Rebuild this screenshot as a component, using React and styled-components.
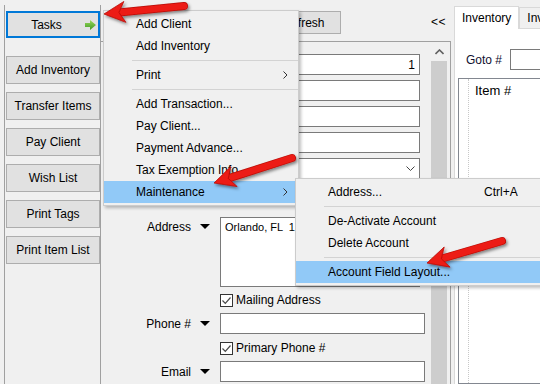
import React from 'react';
import styled, { createGlobalStyle } from 'styled-components';

const GlobalStyle = createGlobalStyle`
    * { box-sizing: border-box; }
    html, body { margin: 0; padding: 0; background: #f0f0f0; }
    body {
        font-family: "Liberation Sans", Arial, sans-serif;
        font-size: 12px;
        color: #000;
    }
`

const Screen = styled.div`
    position: relative;
    display: flex;
    width: 540px;
    height: 384px;
    overflow: hidden;
    background: #f0f0f0;
`

// left task column
const TaskPanel = styled.div`
    display: flex;
    flex-direction: column;
    flex-shrink: 0;
    gap: 8px;
    width: 97px;
    margin: 5px 0 0 4px;
    padding: 6px 0 0 1px;
    border-left: 1px solid #a0a0a0;
    border-right: 1px solid #a0a0a0;
`

const TaskButton = styled.div`
    display: flex;
    align-items: center;
    justify-content: center;
    width: 94px;
    height: 28px;
    background: #e1e1e1;
    border: 1px solid #adadad;
    white-space: nowrap;
`

const TasksButton = styled(TaskButton)`
    height: 27px;
    margin-bottom: 10px;
    padding-right: 2px;
    border: 2px solid #0078d7;
    justify-content: flex-start;
`

const TasksLabel = styled.span`
    flex: 1;
    text-align: center;
`

// center form
const Main = styled.div`
    display: flex;
    flex-direction: column;
    flex-shrink: 0;
    width: 353px;
`

const TopBar = styled.div`
    display: flex;
    align-items: flex-start;
    gap: 5px;
    height: 41px;
    padding: 11px 8px 0 5px;
`

const BarButton = styled.div`
    display: flex;
    align-items: center;
    justify-content: center;
    width: 75px;
    height: 23px;
    background: #e1e1e1;
    border: 1px solid #adadad;
`

const Collapse = styled.span`
    margin-left: auto;
    line-height: 23px;
    letter-spacing: 0.5px;
`

const GroupBox = styled.div`
    flex: 1;
    display: flex;
    margin-right: 3px;
    padding-right: 3px;
    border-top: 1px solid #a0a0a0;
    border-right: 1px solid #a0a0a0;
`

const FormArea = styled.div`
    flex: 1;
    display: flex;
    flex-direction: column;
    padding-top: 12px;
`

const FieldRow = styled.div`
    display: flex;
    align-items: ${({ $top }) => ($top ? 'flex-start' : 'center')};
    margin-top: ${({ $gap }) => $gap}px;
`

const LabelCell = styled.div`
    display: flex;
    align-items: center;
    justify-content: flex-end;
    gap: 9px;
    width: 119px;
    height: ${({ $tall }) => ($tall ? 19 : 21)}px;
    padding-right: 10px;
    white-space: nowrap;
`

const TextBox = styled.div`
    display: flex;
    align-items: center;
    justify-content: ${({ $right }) => ($right ? 'flex-end' : 'flex-start')};
    width: ${({ $wide }) => ($wide ? 205 : 200)}px;
    height: 21px;
    padding: 0 4px;
    background: #fff;
    border: 1px solid #7a7a7a;
`

const AddressBox = styled.div`
    width: 200px;
    height: 70px;
    padding: 3px 4px;
    background: #fff;
    border: 1px solid #7a7a7a;
    font-size: 11px;
    white-space: pre;
`

const CheckRow = styled.div`
    display: flex;
    align-items: center;
    gap: 3px;
    height: 20px;
    margin-top: ${({ $gap }) => $gap}px;
    padding-left: 119px;
`

const CheckBox = styled.div`
    display: flex;
    align-items: center;
    justify-content: center;
    width: 13px;
    height: 13px;
    background: #fff;
    border: 1px solid #333;
`

const ScrollBar = styled.div`
    display: flex;
    flex-direction: column;
    width: 16px;
    margin-top: 1px;
`

const ScrollArrow = styled.div`
    display: flex;
    align-items: center;
    justify-content: center;
    height: 18px;
`

const ScrollThumb = styled.div`
    flex: 1;
    background: #cdcdcd;
`

// right pane
const RightPane = styled.div`
    flex: 1;
    min-width: 0;
    display: flex;
    flex-direction: column;
    overflow: hidden;
`

const TabStrip = styled.div`
    display: flex;
    align-items: flex-end;
    height: 28px;
    padding-top: 5px;
`

const Tab = styled.div`
    position: relative;
    display: flex;
    align-items: center;
    flex-shrink: 0;
    height: ${({ $active }) => ($active ? 23 : 21)}px;
    margin-bottom: ${({ $active }) => ($active ? -1 : 0)}px;
    padding: 0 7px;
    background: ${({ $active }) => ($active ? '#fff' : '#f0f0f0')};
    border: 1px solid #d9d9d9;
    border-bottom: none;
    white-space: nowrap;
    z-index: ${({ $active }) => ($active ? 1 : 0)};
`

const TabPage = styled.div`
    flex: 1;
    display: flex;
    flex-direction: column;
    background: #fff;
    border-top: 1px solid #d9d9d9;
    border-left: 1px solid #d9d9d9;
`

const GotoRow = styled.div`
    display: flex;
    align-items: center;
    gap: 8px;
    margin-top: 20px;
    padding-left: 11px;
    color: #101030;
    white-space: nowrap;
`

const GotoInput = styled.div`
    width: 60px;
    height: 21px;
    border: 1px solid #7a7a7a;
    flex-shrink: 0;
`

const ListView = styled.div`
    flex: 1;
    margin: 8px -4px 0 3px;
    border: 1px solid #828790;
    display: flex;
`

const ListGutter = styled.div`
    width: 10px;
    border-right: 1px dotted #c8c8c8;
`

const ListHeader = styled.div`
    padding: 4px 0 0 6px;
    font-size: 13px;
    line-height: 16px;
`

// popup menus
const Menu = styled.div`
    position: absolute;
    display: flex;
    flex-direction: column;
    padding: 2px 3px 2px 0;
    background: #f0f0f0;
    border: 1px solid #cccccc;
    box-shadow: 2px 2px 3px rgba(0, 0, 0, 0.25);
`

const TasksMenu = styled(Menu)`
    left: 103px;
    top: 10px;
    width: 196px;
`

const MaintenanceMenu = styled(Menu)`
    left: 295px;
    top: 178px;
    width: 262px;
`

const MenuItem = styled.div`
    display: flex;
    align-items: center;
    height: 22px;
    padding: 0 7px 0 32px;
    background: ${({ $hot }) => ($hot ? '#91c9f7' : 'transparent')};
    white-space: nowrap;
`

const MenuLabel = styled.span`
    flex: ${({ $fixed }) => ($fixed ? '0 0 156px' : '1')};
`

const Separator = styled.div`
    height: 7px;
    margin-left: 28px;
    margin-right: -3px;
    padding-top: 3px;

    &::after {
        content: '';
        display: block;
        height: 1px;
        background: #d3d3d3;
    }
`

const Overlay = styled.svg`
    position: absolute;
    left: 0;
    top: 0;
    pointer-events: none;
`

const GreenArrow = () => (
    <svg width="11" height="10" viewBox="0 0 11 10">
        <defs>
            <linearGradient id="ga" x1="0" y1="0" x2="0" y2="1">
                <stop offset="0" stopColor="#9ad95c" />
                <stop offset="1" stopColor="#3f9a22" />
            </linearGradient>
        </defs>
        <polygon points="0,3 5,3 5,0 11,5 5,10 5,7 0,7" fill="url(#ga)" />
    </svg>
);

const DropMark = () => (
    <svg width="10" height="5" viewBox="0 0 10 5">
        <polygon points="0,0 10,0 5,5" fill="#000" />
    </svg>
);

const Check = () => (
    <svg width="11" height="11" viewBox="0 0 11 11">
        <polyline points="1.5,5.5 4.3,8.3 9.5,2.5" fill="none" stroke="#4a4a4a" strokeWidth="1.2" />
    </svg>
);

const SubArrow = () => (
    <svg width="5" height="8" viewBox="0 0 5 8">
        <polyline points="0.5,0.5 4,4 0.5,7.5" fill="none" stroke="#333" strokeWidth="1" />
    </svg>
);

const ComboChevron = () => (
    <svg width="9" height="5" viewBox="0 0 9 5">
        <polyline points="0.5,0.5 4.5,4.5 8.5,0.5" fill="none" stroke="#444" strokeWidth="1" />
    </svg>
);

const UpChevron = () => (
    <svg width="9" height="6" viewBox="0 0 9 6">
        <polyline points="0.5,5 4.5,1 8.5,5" fill="none" stroke="#606060" strokeWidth="1.6" />
    </svg>
);

const arrowShape = (x1, y1, x2, y2) => {
    const dx = x2 - x1;
    const dy = y2 - y1;
    const len = Math.hypot(dx, dy);
    const ux = dx / len;
    const uy = dy / len;
    const px = -uy;
    const py = ux;
    const head = 19;
    const half = 10.5;
    const bx = x2 - ux * head;
    const by = y2 - uy * head;
    const nx = bx + ux * 4;
    const ny = by + uy * 4;
    const pts = [
        [x2, y2],
        [bx + px * half - ux * 2, by + py * half - uy * 2],
        [nx, ny],
        [bx - px * half - ux * 2, by - py * half - uy * 2],
    ];
    return { nx, ny, points: pts.map((p) => p.join(',')).join(' ') };
};

const arrows = [
    [184, 6, 104, 14],
    [292, 158, 214, 183],
    [502, 241, 427, 263],
];

const RedArrows = () => (
    <Overlay width="540" height="384" viewBox="0 0 540 384">
        <defs>
            <filter id="shadow" x="-20%" y="-20%" width="140%" height="160%">
                <feDropShadow dx="1.5" dy="2" stdDeviation="1.4" floodColor="#000" floodOpacity="0.45" />
            </filter>
        </defs>
        {arrows.map(([x1, y1, x2, y2], i) => {
            const a = arrowShape(x1, y1, x2, y2);
            return (
                <g key={i} filter="url(#shadow)">
                    <line x1={x1} y1={y1} x2={a.nx} y2={a.ny} stroke="#b70d07" strokeWidth="8" strokeLinecap="round" />
                    <line x1={x1} y1={y1} x2={a.nx} y2={a.ny} stroke="#ec1b12" strokeWidth="6.6" strokeLinecap="round" />
                    <polygon points={a.points} fill="#ec1b12" stroke="#b70d07" strokeWidth="0.8" strokeLinejoin="round" />
                </g>
            );
        })}
    </Overlay>
);

const App = () => {
    return (
        <Screen>
            <GlobalStyle />

            <TaskPanel>
                <TasksButton>
                    <TasksLabel>Tasks</TasksLabel>
                    <GreenArrow />
                </TasksButton>
                <TaskButton>Add Inventory</TaskButton>
                <TaskButton>Transfer Items</TaskButton>
                <TaskButton>Pay Client</TaskButton>
                <TaskButton>Wish List</TaskButton>
                <TaskButton>Print Tags</TaskButton>
                <TaskButton>Print Item List</TaskButton>
            </TaskPanel>

            <Main>
                <TopBar>
                    <BarButton>New</BarButton>
                    <BarButton>Save</BarButton>
                    <BarButton>Refresh</BarButton>
                    <Collapse>&lt;&lt;</Collapse>
                </TopBar>
                <GroupBox>
                    <FormArea>
                        <FieldRow $gap={0}>
                            <LabelCell>Account #</LabelCell>
                            <TextBox $right>1</TextBox>
                        </FieldRow>
                        <FieldRow $gap={5}>
                            <LabelCell>First Name</LabelCell>
                            <TextBox />
                        </FieldRow>
                        <FieldRow $gap={5}>
                            <LabelCell>Last Name</LabelCell>
                            <TextBox />
                        </FieldRow>
                        <FieldRow $gap={5}>
                            <LabelCell>Company</LabelCell>
                            <TextBox />
                        </FieldRow>
                        <FieldRow $gap={5}>
                            <LabelCell>Tax Exempt</LabelCell>
                            <TextBox $right>
                                <ComboChevron />
                            </TextBox>
                        </FieldRow>
                        <FieldRow $gap={38} $top>
                            <LabelCell $tall>
                                Address <DropMark />
                            </LabelCell>
                            <AddressBox>Orlando, FL  12345</AddressBox>
                        </FieldRow>
                        <CheckRow $gap={3}>
                            <CheckBox><Check /></CheckBox>
                            Mailing Address
                        </CheckRow>
                        <FieldRow $gap={3}>
                            <LabelCell>
                                Phone # <DropMark />
                            </LabelCell>
                            <TextBox $wide />
                        </FieldRow>
                        <CheckRow $gap={4}>
                            <CheckBox><Check /></CheckBox>
                            Primary Phone #
                        </CheckRow>
                        <FieldRow $gap={3}>
                            <LabelCell>
                                Email <DropMark />
                            </LabelCell>
                            <TextBox $wide />
                        </FieldRow>
                    </FormArea>
                    <ScrollBar>
                        <ScrollArrow><UpChevron /></ScrollArrow>
                        <ScrollThumb />
                    </ScrollBar>
                </GroupBox>
            </Main>

            <RightPane>
                <TabStrip>
                    <Tab $active>Inventory</Tab>
                    <Tab>Inventory Log</Tab>
                </TabStrip>
                <TabPage>
                    <GotoRow>
                        Goto #
                        <GotoInput />
                    </GotoRow>
                    <ListView>
                        <ListGutter />
                        <ListHeader>Item #</ListHeader>
                    </ListView>
                </TabPage>
            </RightPane>

            <TasksMenu>
                <MenuItem>Add Client</MenuItem>
                <MenuItem>Add Inventory</MenuItem>
                <Separator />
                <MenuItem>
                    <MenuLabel>Print</MenuLabel>
                    <SubArrow />
                </MenuItem>
                <Separator />
                <MenuItem>Add Transaction...</MenuItem>
                <MenuItem>Pay Client...</MenuItem>
                <MenuItem>Payment Advance...</MenuItem>
                <MenuItem>Tax Exemption Info</MenuItem>
                <MenuItem $hot>
                    <MenuLabel>Maintenance</MenuLabel>
                    <SubArrow />
                </MenuItem>
            </TasksMenu>

            <MaintenanceMenu>
                <MenuItem>
                    <MenuLabel $fixed>Address...</MenuLabel>
                    <span>Ctrl+A</span>
                </MenuItem>
                <Separator />
                <MenuItem>De-Activate Account</MenuItem>
                <MenuItem>Delete Account</MenuItem>
                <Separator />
                <MenuItem $hot>Account Field Layout...</MenuItem>
            </MaintenanceMenu>

            <RedArrows />
        </Screen>
    );
};

export default App;
